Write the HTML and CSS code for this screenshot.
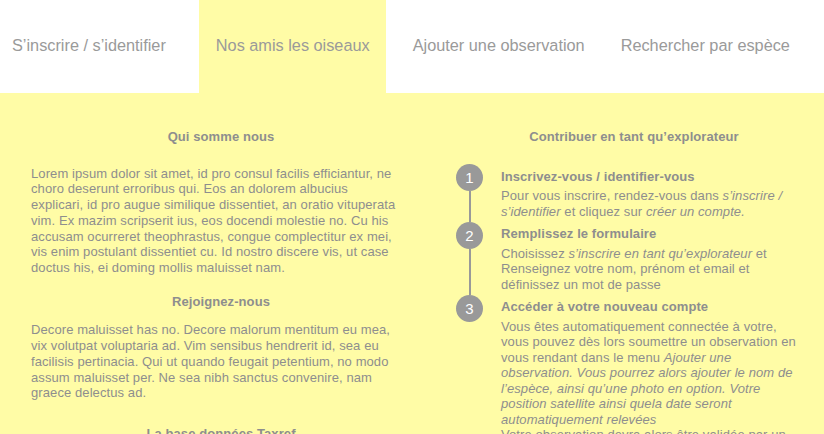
FILE: index.html
```html
<!DOCTYPE html>
<html lang="fr">
<head>
<meta charset="utf-8">
<title>Nos amis les oiseaux</title>
<link rel="stylesheet" href="styles.css">
</head>
<body>
<nav class="nav">
  <a class="nav-item nav-first">S’inscrire / s’identifier</a>
  <a class="nav-item nav-active">Nos amis les oiseaux</a>
  <a class="nav-item nav-third">Ajouter une observation</a>
  <a class="nav-item nav-fourth">Rechercher par espèce</a>
</nav>
<main class="main">
  <section class="col col-left">
    <h2 class="title title-first">Qui somme nous</h2>
    <p class="para">Lorem ipsum dolor sit amet, id pro consul facilis efficiantur, ne choro deserunt erroribus qui. Eos an dolorem albucius explicari, id pro augue similique dissentiet, an oratio vituperata vim. Ex mazim scripserit ius, eos docendi molestie no. Cu his accusam ocurreret theophrastus, congue complectitur ex mei, vis enim postulant dissentiet cu. Id nostro discere vis, ut case doctus his, ei doming mollis maluisset nam.</p>
    <h2 class="title title-second">Rejoignez-nous</h2>
    <p class="para">Decore maluisset has no. Decore malorum mentitum eu mea, vix volutpat voluptaria ad. Vim sensibus hendrerit id, sea eu facilisis pertinacia. Qui ut quando feugait petentium, no modo assum maluisset per. Ne sea nibh sanctus convenire, nam graece delectus ad.</p>
    <h2 class="title title-third">La base données Taxref</h2>
  </section>
  <section class="col col-right">
    <h2 class="title title-first title-right">Contribuer en tant qu’explorateur</h2>
    <ol class="steps">
      <li class="step">
        <div class="step-rail"><span class="step-num">1</span><span class="step-line"></span></div>
        <div class="step-body">
          <h3 class="step-title">Inscrivez-vous / identifier-vous</h3>
          <p class="step-text">Pour vous inscrire, rendez-vous dans <em>s’inscrire / s’identifier</em> et cliquez sur <em>créer un compte.</em></p>
        </div>
      </li>
      <li class="step">
        <div class="step-rail"><span class="step-num">2</span><span class="step-line"></span></div>
        <div class="step-body">
          <h3 class="step-title">Remplissez le formulaire</h3>
          <p class="step-text">Choisissez <em>s’inscrire en tant qu’explorateur</em> et Renseignez votre nom, prénom et email et définissez un mot de passe</p>
        </div>
      </li>
      <li class="step">
        <div class="step-rail"><span class="step-num">3</span></div>
        <div class="step-body">
          <h3 class="step-title">Accéder à votre nouveau compte</h3>
          <p class="step-text">Vous êtes automatiquement connectée à votre, vous pouvez dès lors soumettre un observation en vous rendant dans le menu <em>Ajouter une observation. Vous pourrez alors ajouter le nom de l’espèce, ainsi qu’une photo en option. Votre position satellite ainsi quela date seront automatiquement relevées</em><br>Votre observation devra alors être validée par un expert avant d’être publiée.</p>
        </div>
      </li>
    </ol>
  </section>
</main>
</body>
</html>
```
FILE: styles.css
```css
* { box-sizing: border-box; }
html, body { margin: 0; padding: 0; }
body {
  font-family: "Liberation Sans", Arial, sans-serif;
  color: #8e8e8e;
  background: #fffca6;
  overflow: hidden;
  height: 434px;
}
.nav {
  display: flex;
  height: 93px;
  background: #ffffff;
}
.nav-item {
  display: flex;
  align-items: center;
  padding: 0 16px 2px;
  font-size: 16.3px;
  color: #9a9a9a;
  text-decoration: none;
  white-space: nowrap;
}
.nav-first { padding-left: 12px; padding-right: 33px; }
.nav-active { background: #fffca6; padding-left: 17px; padding-right: 16px; }
.nav-third { padding-left: 27px; padding-right: 18px; }
.nav-fourth { padding-left: 18px; }
.main {
  display: grid;
  grid-template-columns: 380px 1fr;
  column-gap: 33px;
  padding: 35.5px 0 0 31px;
}
.title {
  margin: 0;
  font-size: 13px;
  line-height: 16px;
  font-weight: bold;
  text-align: center;
  color: #8e8e8e;
  letter-spacing: 0.09px;
}
.title-first { margin-bottom: 21px; }
.title-right { margin-bottom: 19.5px; }
.title-second { margin-top: 18.5px; margin-bottom: 12px; }
.title-third { margin-top: 25px; }
.para {
  margin: 0;
  width: 366px;
  font-size: 13px;
  line-height: 15.75px;
  letter-spacing: 0.09px;
}
.steps {
  list-style: none;
  margin: 0;
  padding: 0 22px 0 12px;
}
.step {
  display: grid;
  grid-template-columns: 27px 1fr;
  column-gap: 18px;
}
.step-rail {
  display: flex;
  flex-direction: column;
  align-items: center;
}
.step-num {
  width: 27px;
  height: 27px;
  border-radius: 50%;
  background: #999999;
  color: #ffffff;
  font-size: 15px;
  line-height: 27px;
  text-align: center;
  flex: none;
}
.step-line {
  flex: 1;
  width: 2px;
  background: #999999;
}
.step-body { padding: 4.5px 0 2.5px; }
.step-title {
  margin: 0;
  font-size: 13px;
  line-height: 16px;
  font-weight: bold;
  letter-spacing: 0.09px;
}
.step-text {
  margin: 3.5px 0 0;
  font-size: 13px;
  line-height: 15.5px;
  letter-spacing: 0.09px;
}
.step-text em { font-style: italic; }
```
